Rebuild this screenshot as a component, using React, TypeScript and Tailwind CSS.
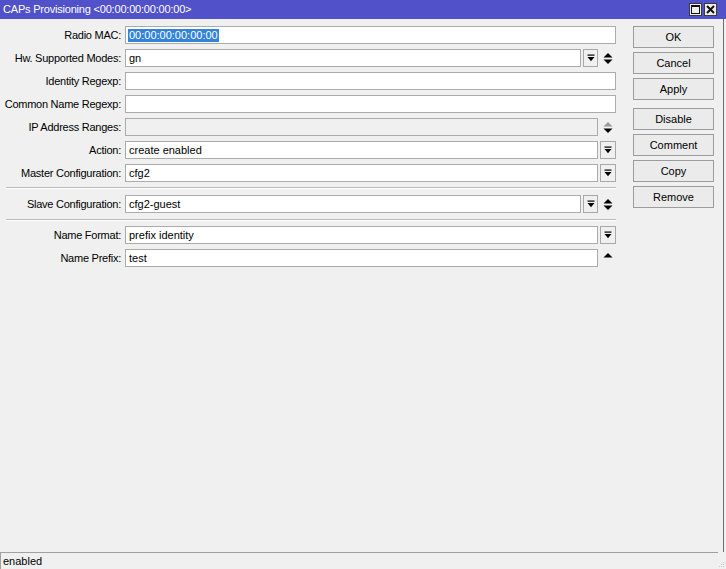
import React from 'react'

type Kind = 'text' | 'select' | 'selectSpin' | 'disabledSpin' | 'upOnly'

function DropButton({ w = 'w-[16px]' }: { w?: string }) {
  return (
    <div className={`${w} ml-[2px] h-[18px] flex items-center justify-center bg-[#f0f0f0] border border-[#a8a8a8]`}>
      <svg width="8" height="8" viewBox="0 0 8 8">
        <rect x="0.5" y="0.5" width="7" height="1.2" fill="#000" />
        <polygon points="0.5,3 7.5,3 4,7.2" fill="#000" />
      </svg>
    </div>
  )
}

function Spin({ up = true, down = true, upGray = false }: { up?: boolean; down?: boolean; upGray?: boolean }) {
  return (
    <div className="w-[16px] ml-[2px] h-[18px] flex items-center justify-center">
      <svg width="10" height="11" viewBox="0 0 10 11">
        {up && <polygon points="0.5,4.5 9.5,4.5 5,0" fill={upGray ? '#9a9a9a' : '#000'} />}
        {down && <polygon points="0.5,6.5 9.5,6.5 5,11" fill="#000" />}
      </svg>
    </div>
  )
}

function Field({
  label,
  value = '',
  kind = 'text',
  selected = false,
}: {
  label: string
  value?: string
  kind?: Kind
  selected?: boolean
}) {
  const disabled = kind === 'disabledSpin'
  return (
    <div className="flex items-center h-[18px]">
      <div className="w-[121px] shrink-0 text-right whitespace-nowrap leading-none tracking-[-0.25px]">{label}</div>
      <div
        className={`ml-[4px] flex-1 h-[18px] flex items-center pl-[2px] border border-[#ababab] leading-none whitespace-nowrap overflow-hidden ${
          disabled ? 'bg-[#f0f0f0]' : 'bg-white'
        }`}
      >
        {selected ? (
          <span className="bg-[#3383d8] text-white px-[1px] py-[1px]">{value}</span>
        ) : (
          <span className="px-[1px]">{value}</span>
        )}
      </div>
      {kind === 'select' && <DropButton />}
      {kind === 'selectSpin' && (
        <>
          <DropButton w="w-[15px]" />
          <Spin />
        </>
      )}
      {kind === 'disabledSpin' && <Spin upGray />}
      {kind === 'upOnly' && <Spin down={false} />}
    </div>
  )
}

function Separator({ className }: { className: string }) {
  return (
    <div className={`ml-[6px] ${className}`}>
      <div className="h-px bg-[#b9b9b9]" />
      <div className="h-px bg-white" />
    </div>
  )
}

function Button({ label, className = '' }: { label: string; className?: string }) {
  return (
    <div
      className={`h-[22px] w-[81px] flex items-center justify-center bg-[#ebebeb] border border-[#9c9c9c] leading-none ${className}`}
    >
      {label}
    </div>
  )
}

export default function App() {
  return (
    <div className="w-[726px] h-[569px] flex flex-col bg-[#f0f0f0] text-[11px] text-black overflow-hidden font-['Liberation_Sans',Arial,sans-serif]">
      {/* Title bar */}
      <div className="h-[19px] shrink-0 bg-[#5151c9] flex items-center pl-[3px]">
        <span className="text-white text-[11px] leading-none tracking-[-0.2px] whitespace-nowrap">
          CAPs Provisioning &lt;00:00:00:00:00:00&gt;
        </span>
        <div className="ml-auto mr-[9px] flex gap-[2px]">
          <div className="w-[13px] h-[13px] bg-[#eeeeee] border border-[#3a3a3a] flex items-center justify-center">
            <svg width="9" height="9" viewBox="0 0 9 9">
              <rect x="0.5" y="0.5" width="8" height="8" fill="none" stroke="#111" strokeWidth="1" />
              <rect x="0" y="0" width="9" height="2" fill="#111" />
            </svg>
          </div>
          <div className="w-[13px] h-[13px] bg-[#eeeeee] border border-[#3a3a3a] flex items-center justify-center">
            <svg width="9" height="9" viewBox="0 0 9 9">
              <path d="M1 1 L8 8 M8 1 L1 8" stroke="#111" strokeWidth="2" />
            </svg>
          </div>
        </div>
      </div>

      {/* Body */}
      <div className="flex-1 flex">
        <div className="w-[616px] shrink-0 pt-[7px]">
          <div className="flex flex-col gap-[5px]">
            <Field label="Radio MAC:" value="00:00:00:00:00:00" selected />
            <Field label="Hw. Supported Modes:" value="gn" kind="selectSpin" />
            <Field label="Identity Regexp:" />
            <Field label="Common Name Regexp:" />
            <Field label="IP Address Ranges:" kind="disabledSpin" />
            <Field label="Action:" value="create enabled" kind="select" />
            <Field label="Master Configuration:" value="cfg2" kind="select" />
          </div>
          <Separator className="mt-[5px] mb-[6px]" />
          <Field label="Slave Configuration:" value="cfg2-guest" kind="selectSpin" />
          <Separator className="mt-[6px] mb-[5px]" />
          <div className="flex flex-col gap-[5px]">
            <Field label="Name Format:" value="prefix identity" kind="select" />
            <Field label="Name Prefix:" value="test" kind="upOnly" />
          </div>
        </div>

        <div className="ml-[17px] pt-[7px] flex flex-col">
          <div className="flex flex-col gap-[4px]">
            <Button label="OK" />
            <Button label="Cancel" />
            <Button label="Apply" />
          </div>
          <div className="mt-[8px] flex flex-col gap-[4px]">
            <Button label="Disable" />
            <Button label="Comment" />
            <Button label="Copy" />
            <Button label="Remove" />
          </div>
        </div>

        <div className="ml-auto w-px bg-[#6e6e6e] mr-[2px]" />
      </div>

      {/* Status bar */}
      <div className="h-[17px] shrink-0 flex">
        <div className="w-[718px] border-t border-l border-[#a0a0a0] flex items-center pl-[2px] leading-none">
          enabled
        </div>
        <div className="flex-1 flex items-end justify-end pb-[1px] pr-[1px]">
          <svg width="7" height="7" viewBox="0 0 7 7">
            <rect x="5" y="1" width="1" height="1" fill="#c8c8c8" />
            <rect x="3" y="3" width="1" height="1" fill="#c8c8c8" />
            <rect x="5" y="3" width="1" height="1" fill="#c8c8c8" />
            <rect x="1" y="5" width="1" height="1" fill="#c8c8c8" />
            <rect x="3" y="5" width="1" height="1" fill="#c8c8c8" />
            <rect x="5" y="5" width="1" height="1" fill="#c8c8c8" />
          </svg>
        </div>
      </div>
    </div>
  )
}
